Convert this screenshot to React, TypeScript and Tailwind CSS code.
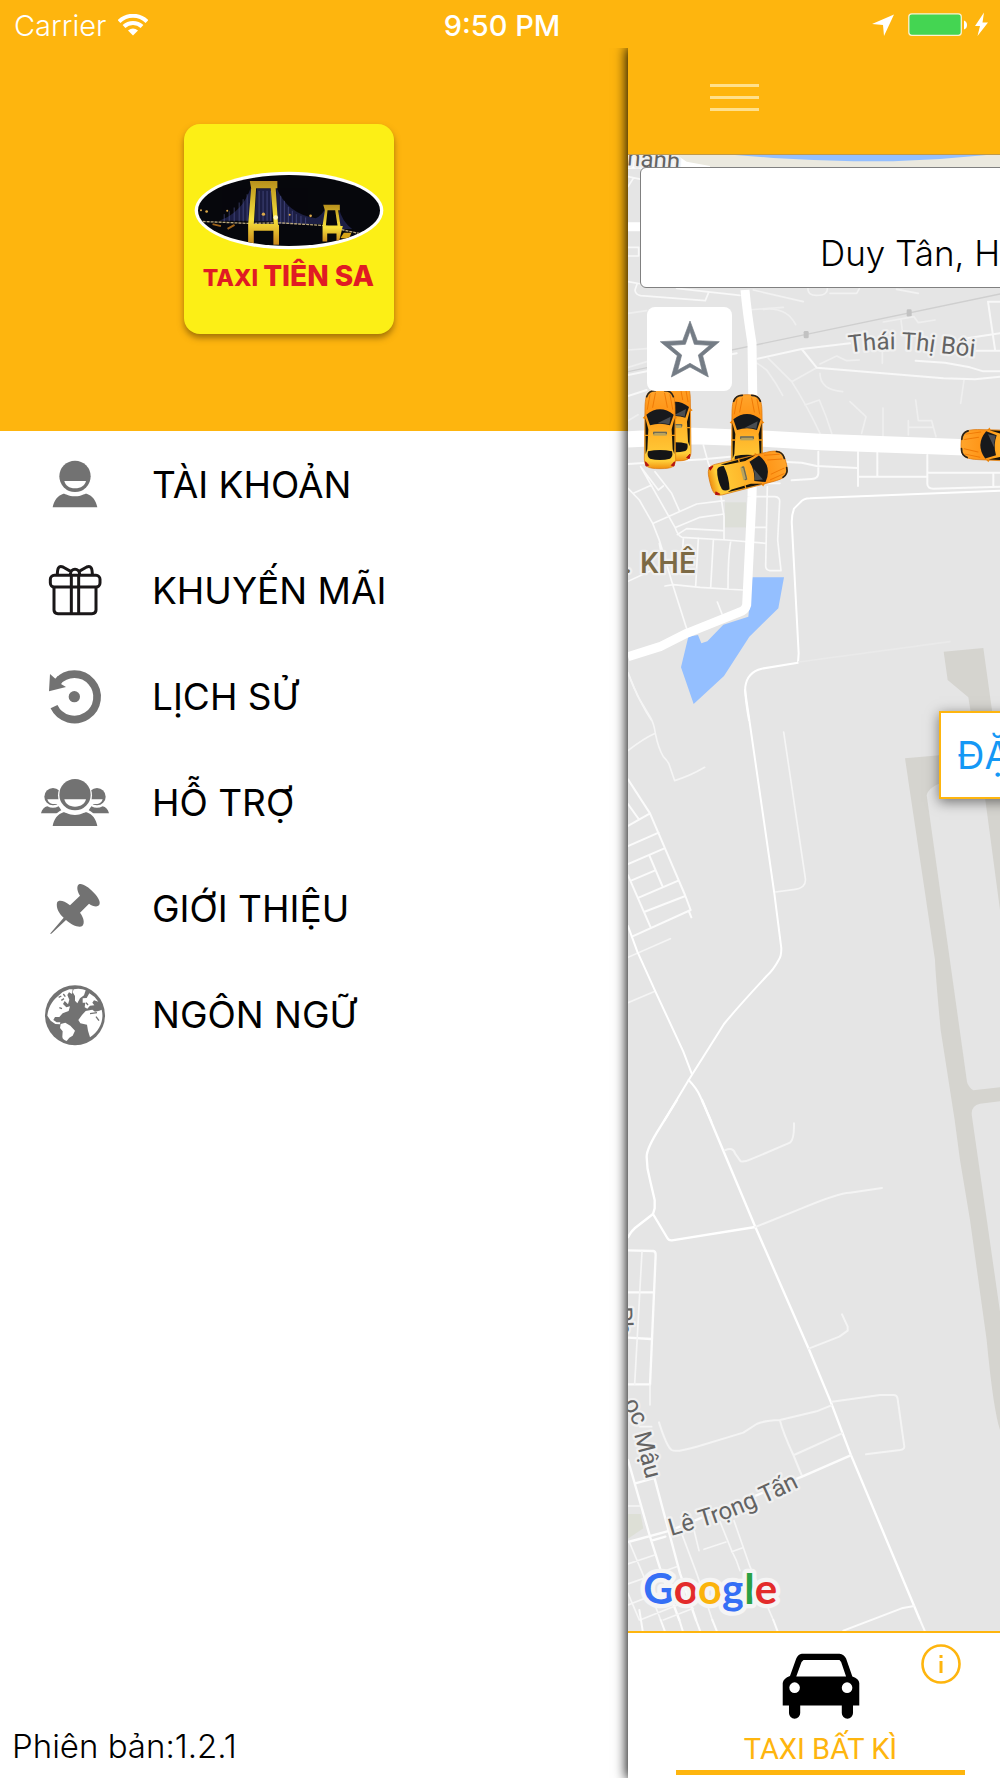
import type { ReactNode } from 'react';

const GREY = '#727272';

function UserIcon() {
  return (
    <svg viewBox="120 54 216 216" className="size-[72px] shrink-0" fill={GREY} aria-hidden="true">
      <circle cx="225" cy="139" r="47" />
      <path d="M193 153H258C255 166 243 175 225 175S196 166 193 153Z" fill="#fff" />
      <path d="M158 232C162 212 172 197 190 191C198 191 204 199 225 199S250 191 260 191C278 197 288 212 292 232Z" />
    </svg>
  );
}

function GiftIcon() {
  return (
    <svg viewBox="120 372 216 216" className="size-[72px] shrink-0" fill="none" stroke="#1a1718" strokeWidth="9" aria-hidden="true">
      <rect x="151" y="436" width="149" height="35" rx="12" />
      <path d="M162 471V540Q162 551 174 551H276Q288 551 288 540V471M214 436V551M236 436V551" />
      <path d="M172 436C172 414 176 406 189 411L212 424M277 436C277 414 273 406 260 411L237 424M211 434C211 412 239 412 239 434" />
    </svg>
  );
}

function HistoryIcon() {
  return (
    <svg viewBox="120 690 216 216" className="size-[72px] shrink-0" aria-hidden="true">
      <path d="M172 756A68 68 0 1 1 162 830" fill="none" stroke={GREY} strokeWidth="23" />
      <path d="M150 732L147 784L198 771L183 762L189 753L173 738L167 747Z" fill={GREY} />
      <circle cx="223" cy="800" r="17" fill={GREY} />
    </svg>
  );
}

function SupportIcon() {
  return (
    <svg viewBox="120 48 216 216" className="size-[72px] shrink-0" fill={GREY} aria-hidden="true">
      <circle cx="159" cy="140" r="26" />
      <circle cx="291" cy="140" r="26" />
      <path d="M142 148H180V162H158Q146 161 142 148ZM308 148H270V162H292Q304 161 308 148Z" fill="#fff" />
      <path d="M123 190C126 178 133 171 142 169Q159 178 176 169L190 190ZM327 190C324 178 317 171 308 169Q291 178 274 169L260 190Z" />
      <circle cx="225" cy="136" r="51" fill="#fff" />
      <path d="M150 232C156 205 166 190 185 180H265C284 190 294 205 300 232Z" fill="#fff" />
      <circle cx="225" cy="134" r="47" />
      <path d="M193 148H258C255 161 243 170 225 170S196 161 193 148Z" fill="#fff" />
      <path d="M158 228C162 208 172 193 190 187C198 187 204 195 225 195S250 187 260 187C278 193 288 208 292 228Z" />
    </svg>
  );
}

function PinIcon() {
  return (
    <svg viewBox="120 366 216 216" className="size-[72px] shrink-0" fill={GREY} aria-hidden="true">
      <path d="M150 551L191 503C176 490 168 472 171 458C175 449 190 450 210 466L240 437C231 424 229 408 237 403C247 399 265 411 280 427C297 444 303 459 297 466C291 472 278 469 267 461L240 488C251 502 255 519 247 528C237 534 216 526 198 510L154 551Z" />
    </svg>
  );
}

function GlobeIcon() {
  return (
    <svg viewBox="120 684 216 216" className="size-[72px] shrink-0" aria-hidden="true">
      <circle cx="225" cy="796" r="90" fill={GREY} />
      <g fill="#fff">
        <path d="M171 741L188 726L208 718L218 718L216 732L207 727L202 735L208 749L204 763L194 753L189 762L199 772L210 769L206 783L188 790L178 801H165L160 810L170 817H181L180 823L166 822L152 812L142 797C144 775 155 754 171 741Z" />
        <path d="M221 718C235 714 249 717 257 721L252 736L240 745L232 760L225 752V738L218 727Z" />
        <path d="M182 822L196 818L211 827L225 842L218 857L208 863L200 873C192 870 187 866 187 860L188 844L180 834Z" />
        <path d="M268 730L284 741L295 755L282 751L277 758L283 766L270 767L262 776L254 772L256 758H248V745L260 744Z" />
        <path d="M246 795L257 783L277 779L285 785L298 782L305 779C313 809 300 842 270 862L264 842L261 824L241 820L235 810Z" />
      </g>
      <path d="M178 773L186 776M258 758L264 765M270 791L291 788M288 800L297 812" stroke={GREY} strokeWidth="4" />
      <path d="M176 742L184 738M190 732L196 740M184 751L192 746" stroke={GREY} strokeWidth="4" />
    </svg>
  );
}

const MENU: { label: string; icon: ReactNode }[] = [
  { label: 'TÀI KHOẢN', icon: <UserIcon /> },
  { label: 'KHUYẾN MÃI', icon: <GiftIcon /> },
  { label: 'LỊCH SỬ', icon: <HistoryIcon /> },
  { label: 'HỖ TRỢ', icon: <SupportIcon /> },
  { label: 'GIỚI THIỆU', icon: <PinIcon /> },
  { label: 'NGÔN NGỮ', icon: <GlobeIcon /> },
];

function StatusBar() {
  return (
    <div className="relative z-20 grid h-12 shrink-0 grid-cols-[1fr_auto_1fr] items-center bg-[#feb50e] pt-[2px] pr-[10px] pl-[14px] text-[29px] leading-none text-white">
      <div className="flex items-center gap-3">
        <span className="font-light">Carrier</span>
        <svg viewBox="0 0 30 22" className="h-[22px] w-[30px]" fill="none" stroke="#fff" aria-hidden="true">
          <path d="M1 7.500A20 20 0 0 1 29 7.500" strokeWidth="4" />
          <path d="M6 12.500A13 13 0 0 1 24 12.500" strokeWidth="4" />
          <path d="M15 21.500L10 16.500Q15 12.500 20 16.500Z" fill="#fff" stroke="none" />
        </svg>
      </div>
      <span className="font-medium">9:50 PM</span>
      <div className="flex items-center justify-end">
        <svg viewBox="872 12 118 26" className="h-[26px] w-[118px]" aria-hidden="true">
          <path d="M894 14.500L884 36L883 25L872 24Z" fill="#fff" />
          <rect x="908.800" y="13.800" width="52.500" height="21.500" rx="3" fill="#44d552" stroke="#fff3cf" strokeWidth="1.300" />
          <path d="M964 20.500Q967 21.500 967 25T964 29.500Z" fill="#fff" />
          <path d="M984 12.500L975 26H980L977.500 36L988 22.500H982.500Z" fill="#fff" />
        </svg>
      </div>
    </div>
  );
}

function TaxiLogo() {
  return (
    <div className="flex size-[210px] flex-col items-center rounded-2xl bg-[#fcef16] pt-[47px] shadow-[0_4px_6px_rgba(90,60,0,0.55)]">
      <svg viewBox="104 211 572 236" className="h-[79px] w-[190px]" aria-hidden="true">
        <defs>
          <clipPath id="logo-oval">
            <ellipse cx="390" cy="329" rx="274" ry="107" />
          </clipPath>
          <linearGradient id="logo-tower" x1="0" y1="0" x2="0" y2="1">
            <stop offset="0" stopColor="#b8901c" />
            <stop offset="0.600" stopColor="#f8e33c" />
            <stop offset="1" stopColor="#c8861a" />
          </linearGradient>
        </defs>
        <ellipse cx="390" cy="329" rx="284" ry="117" fill="#fff" />
        <g clipPath="url(#logo-oval)">
          <rect x="104" y="211" width="572" height="236" fill="#06070c" />
          <path d="M180 360Q250 335 275 260V360ZM352 260Q385 340 470 352Q490 345 500 320V370H352ZM540 320Q548 360 580 385H540ZM293 262H340V362H285Z" fill="#272a5c" opacity="0.700" />
          <path d="M195 340V362M210 330V362M225 320V362M240 305V362M252 295V362M264 280V362M300 270V360M312 270V360M324 270V360M335 270V360M365 285V365M376 300V365M388 318V365M400 330V368M412 340V368M426 345V368M440 350V370" stroke="#6065a8" strokeWidth="3" opacity="0.500" />
          <path d="M130 362L270 368L360 366L490 374L610 400" stroke="#b9a77c" strokeWidth="4" fill="none" strokeDasharray="9 3" />
          <path d="M272 240H355V262H350L357 372H360V432H343V390H284V432H267V372L276 262ZM291 262L284 370H344L335 262Z" fill="url(#logo-tower)" fillRule="evenodd" />
          <path d="M493 312H543V328H538L545 376H552L540 425H533V398H505V422H491V376L498 328ZM506 328L501 374H536L529 328Z" fill="url(#logo-tower)" fillRule="evenodd" />
          <path d="M545 412L555 396H578L570 415Z" fill="#d9a516" />
          <path d="M160 370L185 376M205 384L226 372" stroke="#a0641a" strokeWidth="6" />
          <g fill="#dba84a">
            <circle cx="125" cy="328" r="3" />
            <circle cx="142" cy="332" r="4" />
            <circle cx="204" cy="330" r="3" />
            <circle cx="313" cy="340" r="5" />
            <circle cx="392" cy="342" r="3" />
            <circle cx="455" cy="345" r="4" />
            <circle cx="350" cy="350" r="7" fill="#fff6bd" />
          </g>
        </g>
      </svg>
      <p className="mt-[10px] text-[23px] leading-8 font-extrabold whitespace-nowrap text-[#e01b24]">
        TAXI <span className="text-[28px]">TIÊN SA</span>
      </p>
    </div>
  );
}

function Drawer() {
  return (
    <aside className="flex w-[62.8%] shrink-0 flex-col bg-white">
      <div className="flex h-[383px] justify-center bg-[#feb50e] pt-[76px] pr-[51px]">
        <TaxiLogo />
      </div>
      <nav>
        <ul>
          {MENU.map((item) => (
            <li key={item.label}>
              <a href="#" className="flex h-[106px] items-center gap-10 pl-10 text-[37px] leading-none text-black">
                {item.icon}
                {item.label}
              </a>
            </li>
          ))}
        </ul>
      </nav>
      <p className="mt-auto pb-3 pl-3 text-[33px] leading-10 font-light text-black">Phiên bản:1.2.1</p>
    </aside>
  );
}

function Car({ x, y, angle = 0 }: { x: number; y: number; angle?: number }) {
  return (
    <g transform={`translate(${x} ${y}) rotate(${angle})`}>
      <path d="M-52 -34L-44 -42V-30ZM52 -34L44 -42V-30Z" fill="#f08a0c" />
      <path d="M-45 -70C-43 -110 -36 -118 0 -118S43 -110 45 -70L47 90C46 112 38 118 0 118S-46 112 -47 90Z" fill="url(#car-body)" stroke="#d9740a" strokeWidth="2" />
      <path d="M-40 -98Q-34 -116 -14 -116M40 -98Q34 -116 14 -116" stroke="#29241c" strokeWidth="5" fill="none" />
      <path d="M-30 -104L-38 -60M30 -104L38 -60M-14 -108L-22 -66M14 -108L22 -66" stroke="#f07a06" strokeWidth="3" fill="none" />
      <path d="M-41 -44Q0 -76 41 -44L30 -12Q0 -22 -30 -12Z" fill="#17191c" />
      <path d="M-8 -18L32 -38L28 -15Q10 -20 -8 -18Z" fill="#4a4d51" />
      <path d="M-44 -34L-35 0L-38 60L-43 74ZM44 -34L35 0L38 60L43 74Z" fill="#17130b" />
      <path d="M-45 18H-35M45 18H35" stroke="#f79b12" strokeWidth="4" />
      <path d="M-36 66Q0 58 36 66Q40 82 30 88Q0 96 -30 88Q-40 82 -36 66Z" fill="#141516" />
      <rect x="-20" y="7" width="40" height="12" fill="#b9a35c" />
      <path d="M-19 13V9H19V13" stroke="#6e6a55" strokeWidth="4" fill="none" />
      <path d="M-43 98L-34 108L-41 110ZM43 98L34 108L41 110Z" fill="#b30f0f" stroke="#b30f0f" strokeWidth="3" />
    </g>
  );
}

function CityMap() {
  return (
    <svg viewBox="24 0 1116 4428" preserveAspectRatio="xMinYMin slice" className="absolute inset-0 size-full" fill="none" strokeLinecap="round" strokeLinejoin="round" role="img" aria-label="Bản đồ">
      <defs>
        <linearGradient id="car-body" x1="0" y1="0" x2="0" y2="1">
          <stop offset="0" stopColor="#ffa52c" />
          <stop offset="0.300" stopColor="#ff9314" />
          <stop offset="0.600" stopColor="#ffb92c" />
          <stop offset="0.900" stopColor="#ffcf3a" />
          <stop offset="1" stopColor="#f09010" />
        </linearGradient>
        <path id="street-thai-thi-boi" d="M688 188Q828 168 948 188L1138 208" />
        <path id="street-le-trong-tan" d="M153 1308L290 1268Q400 1230 560 1150" />
      </defs>
      <rect x="24" width="1116" height="4428" fill="#e5e5e5" />

      {/* coast behind the address box */}
      <g transform="translate(-60 -465)">
        <path d="M84 465H1200V505H84Z" fill="#ebe9df" />
        <path d="M84 465H230L260 485L330 498V506H84Z" fill="#fff" />
        <path d="M405 465L520 474L640 480L760 484H880L1020 477L1160 465Z" fill="#94bfff" />
        <path d="M84 680H124" stroke="#fff" strokeWidth="27" />
        <path d="M84 530L124 538M100 535L84 560M84 742H116V768H84M84 845L124 852M112 850L105 870Q106 884 122 887L316 902L326 877M230 865L420 886" stroke="#f8f8f8" strokeWidth="5" />
        <path d="M624 865Q622 886 650 886Q684 886 682 865M460 870L610 905M690 880H770L778 866M890 868L955 880" stroke="#f2f2f2" strokeWidth="5" />
      </g>

      {/* An Khê */}
      <g transform="translate(0 405)">
        <path d="M315 637H378V712H315Z" fill="#dddfd8" />
        <path d="M24 245L1140 12" stroke="#cfcfcf" strokeWidth="4" />
        <rect x="551" y="123" width="15" height="22" rx="4" fill="#c2c2c2" />
        <rect x="860" y="58" width="15" height="22" rx="4" fill="#c2c2c2" />
        <path d="M397 862H492L475 955L388 1040L312 1158L221 1242L183 1132L205 1040L234 1035L244 1060L262 1054L310 1004L385 980Z" fill="#94bfff" />
        <path d="M24 180L80 176M24 232L80 215M24 70L80 62M24 392L54 374M380 60L490 52M430 58Q500 50 527 104M412 220L440 240L466 278L488 316M445 205L515 275Q560 345 600 430M515 275L590 233M600 222L650 198L680 212L718 210M600 250Q600 300 668 305M555 345L598 330Q620 380 635 430M690 335L738 380L725 430M789 354V440M887 330L895 392H935L948 440M865 392V435M865 412H940M1032 270L1022 340M787 170V220M843 90L848 130M790 96L882 80L895 98L945 90" stroke="#efefef" strokeWidth="5" />
        <path d="M24 255L350 190M24 318L80 300M413 206L545 177L690 160M545 177L590 233L970 265L1065 268L1140 260M887 212L975 218L1050 232L1090 244H1140M1104 35H1140M1104 35L1125 178M1040 145L1140 130M1062 182H1140" stroke="#f8f8f8" strokeWidth="6" />
        <path d="M24 522L250 508L330 500M500 516L545 518L590 528L712 534M595 485V550Q594 566 575 567L515 571M714 486V588M772 486V560M714 560H922M922 495V582Q923 596 940 596L1140 590M922 548H1140M1120 548V588" stroke="#fafafa" strokeWidth="6" />
        <path d="M1140 602L570 625Q550 625 540 638L522 656Q513 680 516 710L536 1090L534 1118L425 1136Q382 1146 376 1190Q374 1220 387 1290" stroke="#fff" strokeWidth="6" />
        <path d="M24 595L58 630L98 700Q120 750 133 800L160 890L200 1016M62 530L165 712Q174 738 186 742L320 750L437 760M250 465L265 520L300 600L312 680V748M62 530L115 600L130 588M40 610L95 585M105 545L155 610L178 662M100 700L230 642L312 632M168 712L240 682L312 672M172 734L200 716L308 722M190 745L186 810M235 745L227 888M280 752L272 892M332 755Q324 800 324 896M135 888L160 884L240 892L368 900M410 620H465Q480 622 479 635L473 750L483 842H450Q437 840 437 828L442 590M405 712H437M24 874L130 825L118 760M292 936L306 972M440 580H480" stroke="#f9f9f9" strokeWidth="5" />
        <path d="M24 1150Q60 1240 94 1290" stroke="#f6f6f6" strokeWidth="5" />
        <path d="M536 1116L990 1055" stroke="#eaeaea" strokeWidth="5" />
        <path d="M375 0Q380 60 396 160L400 440L396 620L380 945Q376 962 355 968L200 1030L120 1070L24 1100" stroke="#fff" strokeWidth="27" strokeLinecap="butt" />
        <path d="M24 448L220 438L430 446L600 456L1140 476" stroke="#fff" strokeWidth="49" strokeLinecap="butt" />
        <path d="M971 1085L1090 1074L1120 1290H1056L1045 1222L983 1170Z" fill="#d5d4cf" />
      </g>

      {/* airfield and the west side streets */}
      <g transform="translate(0 1455)">
        <path d="M855 355L1080 335H1140V2370Q1120 2310 1100 2100L1050 1740L1020 1560L1004 1440L962 1170Q946 1000 945 960Z" fill="#d5d4cf" />
        <path d="M920 465Q925 445 955 432L1088 420L1140 810V1342L1060 1351Q1044 1340 1041 1325Z" fill="#e5e5e5" />
        <path d="M1140 1384L1080 1391Q1050 1398 1056 1430L1140 2015Z" fill="#e5e5e5" />
        <path d="M375 150L463 760L484 925Q484 950 476 960Q460 990 440 1008Q350 1105 312 1152L206 1320L134 1440" stroke="#fff" strokeWidth="6" />
        <path d="M491 276L556 715Q560 745 520 749L467 756M24 98Q40 140 54 170L90 230Q102 250 106 280Q115 325 130 350Q140 360 146 370L164 422Q210 408 254 382M24 332Q70 296 106 280M24 952L151 896M24 1088L105 1054" stroke="#f5f5f5" strokeWidth="5" />
        <path d="M24 418L90 520L135 625L195 765L212 810L36 890M24 492L56 537M24 558L90 520M24 618L116 578M24 672L133 625M24 706L92 862M33 722L104 692M88 646L127 738M56 773L175 722M72 816L196 768M206 812L214 832" stroke="#fbfbfb" strokeWidth="6" />
        <path d="M24 858L52 935L106 1054L190 1235L216 1303M206 1320Q230 1345 240 1368L274 1444" stroke="#fff" strokeWidth="6" />
      </g>

      {/* Cẩm Lệ */}
      <g transform="translate(0 2835)">
        <path d="M24 1242H62L70 1285L24 1316Z" fill="#dddfd6" />
        <path d="M171 0L120 82Q80 145 80 170Q80 205 90 240L104 300V325L99 342L142 414Q146 422 156 421L406 381M99 342L45 384Q32 395 24 412" stroke="#fff" strokeWidth="7" />
        <path d="M246 0L406 381L566 746L632 905L692 1063L900 1560" stroke="#fff" strokeWidth="7" />
        <path d="M314 151Q340 140 345 160L362 184Q375 186 390 179L510 128Q523 118 522 70M406 381L545 325Q660 277 690 278L786 264M566 746L658 710L683 692V680L666 643M636 905L780 885H820Q832 885 833 898L853 1040Q853 1048 840 1050L738 1063M117 967Q140 1040 155 1050Q168 1058 230 1040L370 998L410 972Q430 962 480 960L590 934L634 916M480 962Q490 1000 520 1065L546 1128M522 1065L666 1000" stroke="#f4f4f4" strokeWidth="6" />
        <path d="M24 451L100 453Q107 454 107 465L90 855M24 577H98M24 713L93 717M24 853H90M24 1080L90 1310L125 1420L178 1560M24 1326L150 1292L546 1130L692 1066M104 1136L180 1420L228 1560M46 1150L104 1134M136 1310L95 1322" stroke="#fcfcfc" strokeWidth="7" />
        <path d="M66 455L44 853M90 855V915M24 1218H60M60 980H95M28 1326L80 1450L122 1560M24 1392L104 1365M24 1452L170 1400M24 1515L190 1450M60 1560L210 1500M130 1560L220 1525M24 1480L58 1560M185 1300L230 1420L277 1560M222 1290L237 1352M300 1265L335 1352Q350 1380 360 1412M342 1262L390 1400L460 1560M252 1348L318 1326M335 1355L366 1344" stroke="#f6f6f6" strokeWidth="5" />
        <path d="M670 1592L845 1525L882 1518M900 1560L914 1592M58 1530L68 1592M122 1560L134 1592M178 1560L188 1592M228 1560L240 1592M277 1560L290 1592M460 1560L472 1592" stroke="#fbfbfb" strokeWidth="6" />
      </g>

      <g fontFamily="Roboto, sans-serif" fontSize="72" fill="#636363" stroke="#f0f0f0" strokeWidth="14" paintOrder="stroke">
        <text x="78" y="36" textAnchor="middle" transform="rotate(5 78 36)">Thành</text>
        <g transform="translate(0 405)">
          <text><textPath href="#street-thai-thi-boi">Thái Thị Bôi</textPath></text>
          <text x="12" y="850" fontSize="87" fontWeight="500" fill="#7c6a45">.</text>
          <text x="60" y="850" fontSize="87" fontWeight="500" fill="#7c6a45">KHÊ</text>
        </g>
        <g transform="translate(0 2835)">
          <text><textPath href="#street-le-trong-tan">Lê Trọng Tấn</textPath></text>
          <text x="-15" y="620" transform="rotate(88 -15 620)">Ph</text>
          <text x="8" y="910" transform="rotate(62 8 910)">ọc</text>
          <text x="42" y="1002" transform="rotate(75 42 1002)">Mậu</text>
        </g>
      </g>

      <text x="70" y="4348" fontFamily="Lato, sans-serif" fontSize="126" fontWeight="700" stroke="#f5f5f5" strokeWidth="26" paintOrder="stroke">
        <tspan fill="#356ff5">G</tspan>
        <tspan fill="#e32b2b">o</tspan>
        <tspan fill="#fbb30c">o</tspan>
        <tspan fill="#356ff5">g</tspan>
        <tspan fill="#2aa145">l</tspan>
        <tspan fill="#e32b2b">e</tspan>
      </text>

      <g transform="translate(0 405)">
        <Car x={166} y={395} />
        <Car x={120} y={418} />
        <Car x={381} y={432} />
        <Car x={384} y={547} angle={76} />
        <Car x={1141} y={466} angle={-88} />
      </g>
    </svg>
  );
}

function Main() {
  return (
    <main className="relative z-10 flex min-w-0 flex-1 flex-col bg-white shadow-[0_0_12px_1px_#000]">
      <header className="flex h-[107px] shrink-0 items-center border-b border-[#c09a4a] bg-[#feb50e] pb-2 pl-[82px]">
        <button type="button" aria-label="Menu" className="flex w-[49px] flex-col gap-[9px]">
          <span className="h-[3px] bg-[#ffe08c]" />
          <span className="h-[3px] bg-[#ffe08c]" />
          <span className="h-[3px] bg-[#ffe08c]" />
        </button>
      </header>

      <section className="relative flex-1 overflow-hidden">
        <CityMap />
        <button type="button" className="absolute top-3 -right-4 left-3 flex h-[121px] items-end overflow-hidden rounded-md border border-[#808080] bg-white pb-[14px] pl-[179px] text-[35px] leading-10 font-light whitespace-nowrap text-black">
          Duy Tân, H
        </button>
        <button type="button" aria-label="Yêu thích" className="absolute top-[152px] left-[19px] flex h-[84px] w-[85px] items-center justify-center rounded-lg bg-white">
          <svg viewBox="116 86 186 180" className="h-[60px] w-[62px]" aria-hidden="true">
            <path d="M209 92L231 151L297 154L247 196L264 260L209 230L153 260L171 196L120 154L187 151ZM209 122L195 162L149 165L184 194L172 240L209 219L245 240L234 194L268 165L222 162Z" fill="#747c85" fillRule="evenodd" stroke="#747c85" strokeWidth="2" />
          </svg>
        </button>
        <button type="button" className="absolute top-[556px] left-[311px] h-[88px] border-2 border-[#feb50e] bg-white px-4 text-[38px] leading-none whitespace-nowrap text-[#1598f5] shadow-[0_3px_12px_rgba(0,0,0,0.5)]">
          ĐẶT
        </button>
      </section>

      <footer className="relative h-[147px] shrink-0 border-t-2 border-[#feb50e]">
        <button type="button" className="ml-12 flex h-[142px] w-[289px] flex-col items-center border-b-[5px] border-[#feb50e] pt-5">
          <svg viewBox="487 157 234 200" className="h-[66px] w-[78px]" aria-hidden="true">
            <path d="M546 159H660Q674 160 680 174L699 228Q719 234 720 248V316H701V339A17 17 0 0 1 667 339V316H541V339A17 17 0 0 1 507 339V316H488V248Q490 234 510 227L529 174Q534 160 546 159ZM551 178L545 184L529 228H680L665 184L660 178Z" fill="#000" fillRule="evenodd" />
            <circle cx="524" cy="262" r="16" fill="#fff" />
            <circle cx="683" cy="262" r="16" fill="#fff" />
          </svg>
          <span className="mt-3 font-[Roboto] text-[29px] leading-9 text-[#feb50e]">TAXI BẤT KÌ</span>
        </button>
        <button type="button" aria-label="Thông tin" className="absolute top-[11px] left-[293px]">
          <svg viewBox="0 0 40 40" className="size-10" fill="none" stroke="#feb50e" aria-hidden="true">
            <circle cx="20" cy="20" r="18.500" strokeWidth="2.600" />
            <path d="M20 17V29M20 11V14" strokeWidth="3" />
          </svg>
        </button>
      </footer>
    </main>
  );
}

export default function App() {
  return (
    <div className="flex min-h-screen flex-col overflow-hidden bg-white font-['Inter',sans-serif]">
      <StatusBar />
      <div className="flex flex-1">
        <Drawer />
        <Main />
      </div>
    </div>
  );
}
